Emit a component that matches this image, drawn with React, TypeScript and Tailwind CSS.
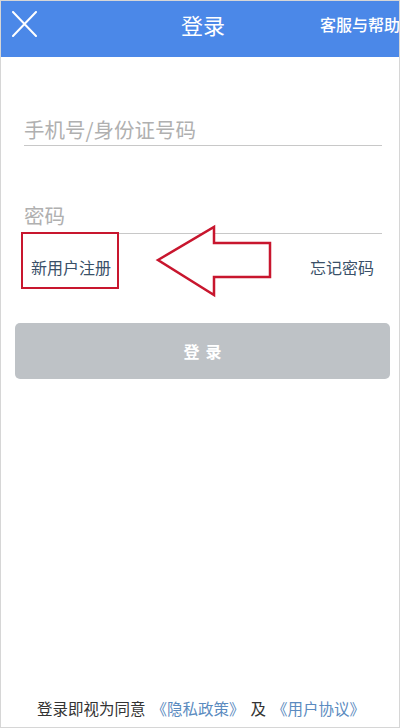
import React from "react";

const cjk = { fontFamily: '"Noto Sans CJK SC", "Noto Sans", sans-serif' };

// Thin close cross in the top bar
function CloseIcon() {
  return (
    <svg width="25" height="26" viewBox="0 0 25 26" fill="none">
      <path d="M1 1 L24 25 M24 1 L1 25" stroke="white" strokeWidth="2" strokeLinecap="round" />
    </svg>
  );
}

// Outlined red arrow pointing left at the register link
function PointerArrow() {
  return (
    <svg width="126" height="76" viewBox="0 0 126 76" className="ml-[31px] -mt-[9px] -mb-[10px] shrink-0">
      <polygon
        points="8,37 64,4 64,20 120,20 120,54 64,54 64,72"
        fill="white"
        stroke="#c8162e"
        strokeWidth="2.5"
        strokeLinejoin="miter"
      />
    </svg>
  );
}

export default function App() {
  return (
    <div
      className="w-[400px] h-[728px] box-border border border-[#d6d6d6] bg-white flex flex-col overflow-hidden"
      style={cjk}
    >
      {/* Top bar */}
      <header className="h-[56px] bg-[#4b88e8] grid grid-cols-[1fr_auto_1fr] items-center pb-[10px] overflow-hidden">
        <div className="pl-[11px] flex items-center">
          <CloseIcon />
        </div>
        <h1 className="text-white text-[22px] leading-[30px] pl-[6px]">登录</h1>
        <div className="flex justify-end -mr-[1px]">
          <span className="text-white text-[16px] leading-[22px] font-medium whitespace-nowrap">客服与帮助</span>
        </div>
      </header>

      {/* Account / password fields */}
      <div className="ml-[23px] mr-[17px]">
        <div className="mt-[48px] h-[41px] border-b border-[#c8c8c8] flex items-end pb-[2px]">
          <span className="text-[20.5px] leading-[28px] text-[#b0b0b0]">手机号/身份证号码</span>
        </div>
        <div className="mt-[47px] h-[41px] border-b border-[#c8c8c8] flex items-end pb-[4px]">
          <span className="text-[20.5px] leading-[28px] text-[#b0b0b0]">密码</span>
        </div>
      </div>

      {/* Register / forgot password */}
      <div className="flex items-start -mt-[2px] ml-[20px] pr-[25px]">
        <div className="w-[98px] h-[57px] border-2 border-[#c8162e] pt-[22px] pl-[8px] shrink-0">
          <span className="block text-[16px] leading-[22px] text-[#3a5068] whitespace-nowrap">新用户注册</span>
        </div>
        <PointerArrow />
        <span className="ml-auto mt-[24px] text-[16px] leading-[22px] text-[#3a5068] whitespace-nowrap">忘记密码</span>
      </div>

      {/* Login button */}
      <button className="mt-[34px] ml-[14px] mr-[9px] h-[56px] rounded-[5px] bg-[#bec2c6] text-white text-[16px] font-semibold tracking-[6px] pl-[6px]">
        登录
      </button>

      {/* Agreement notice */}
      <p className="mt-auto pb-[8px] flex justify-center gap-[6px] text-[15.5px] leading-[22px] text-[#333333] whitespace-nowrap pl-[2px]">
        <span>登录即视为同意</span>
        <span className="text-[#5b8bc0]">《隐私政策》</span>
        <span>及</span>
        <span className="text-[#5b8bc0]">《用户协议》</span>
      </p>
    </div>
  );
}
